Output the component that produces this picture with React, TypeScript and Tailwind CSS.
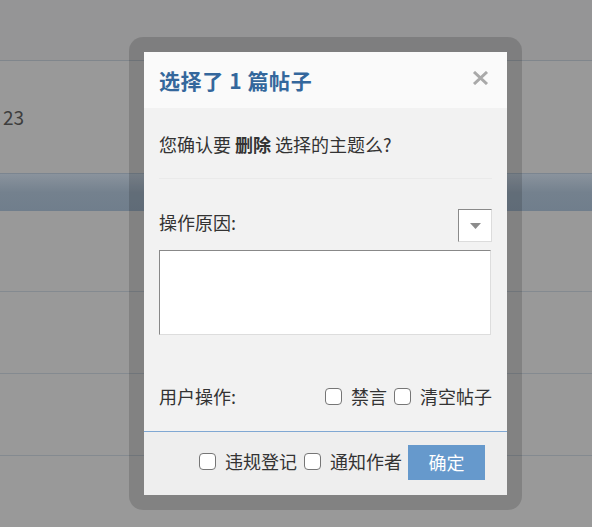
const font = { fontFamily: '"Noto Sans CJK SC", "Noto Sans", sans-serif' };

function Box() {
  return <span className="inline-block w-[17px] h-[17px] shrink-0 rounded-[4px] border-[1.5px] border-[#767676] bg-white" />;
}

function Check({ label }: { label: string }) {
  return (
    <label className="flex items-center">
      <Box />
      <span className="ml-[9px] leading-none">{label}</span>
    </label>
  );
}

export default function App() {
  return (
    <div className="relative w-[592px] h-[527px] overflow-hidden bg-[#999999] text-[#333]" style={font}>
      {/* page behind the mask */}
      <div className="h-[61px] bg-[#959596] border-b border-[#80868c]" />
      <div className="h-[112px] flex items-center pl-[3px] text-[19px] text-[#3e3e3e]">23</div>
      <div className="h-[38px] border-t border-[#7b8590] bg-gradient-to-b from-[#8a939d] via-[#74818e] to-[#707e8c]" />
      <div className="h-[81px] border-b border-[#848a90]" />
      <div className="h-[82px] border-b border-[#848a90]" />
      <div className="h-[82px] border-b border-[#848a90]" />

      {/* modal */}
      <div className="absolute left-[129px] top-[37px] w-[393px] h-[473px] rounded-[14px] bg-black/15 p-[15px]">
        <div className="flex flex-col h-full bg-[#f2f2f2]">
          <div className="h-[56px] shrink-0 flex items-center justify-between pl-[15px] pr-[18px] bg-[#fafafa]">
            <h3 className="text-[21px] tracking-[0.6px] font-bold text-[#34679c] leading-none">选择了 1 篇帖子</h3>
            <svg width="17" height="14" viewBox="0 0 17 14" className="mt-[-4px]">
              <path d="M2 1 L15 13 M15 1 L2 13" stroke="#a9a9a9" strokeWidth="3" />
            </svg>
          </div>

          <div className="flex-1 px-[15px] text-[18px]">
            <div className="h-[71px] flex items-center pt-[2px] border-b border-[#eaeaea]">
              <p className="leading-none">
                您确认要 <b>删除</b> 选择的主题么?
              </p>
            </div>
            <div className="mt-[30px] h-[33px] flex items-center justify-between">
              <span className="leading-none mb-[8px]">操作原因:</span>
              <div className="w-[34px] h-[33px] flex items-center justify-center bg-white border border-t-[#8a8a8a] border-l-[#8a8a8a] border-r-[#dcdcdc] border-b-[#dcdcdc]">
                <svg width="11" height="6" viewBox="0 0 11 6">
                  <path d="M0 0 H11 L5.5 6 Z" fill="#8c8c8c" />
                </svg>
              </div>
            </div>
            <textarea className="mt-[8px] block w-[332px] h-[85px] resize-none bg-white border border-t-[#888] border-l-[#888] border-r-[#ddd] border-b-[#ddd] outline-none" />
            <div className="mt-[44px] h-[34px] flex items-center justify-between">
              <span className="leading-none">用户操作:</span>
              <div className="flex items-center gap-[7px]">
                <Check label="禁言" />
                <Check label="清空帖子" />
              </div>
            </div>
          </div>

          <div className="h-[64px] shrink-0 flex items-center justify-end pr-[22px] border-t border-[#80a8d3] bg-[#eeeeee] text-[18px]">
            <div className="flex items-center gap-[7px] mt-[-5px]">
              <Check label="违规登记" />
              <Check label="通知作者" />
            </div>
            <button className="ml-[6px] mt-[-3px] w-[77px] h-[35px] bg-[#6699cc] text-white text-[18px] leading-none">确定</button>
          </div>
        </div>
      </div>
    </div>
  );
}
